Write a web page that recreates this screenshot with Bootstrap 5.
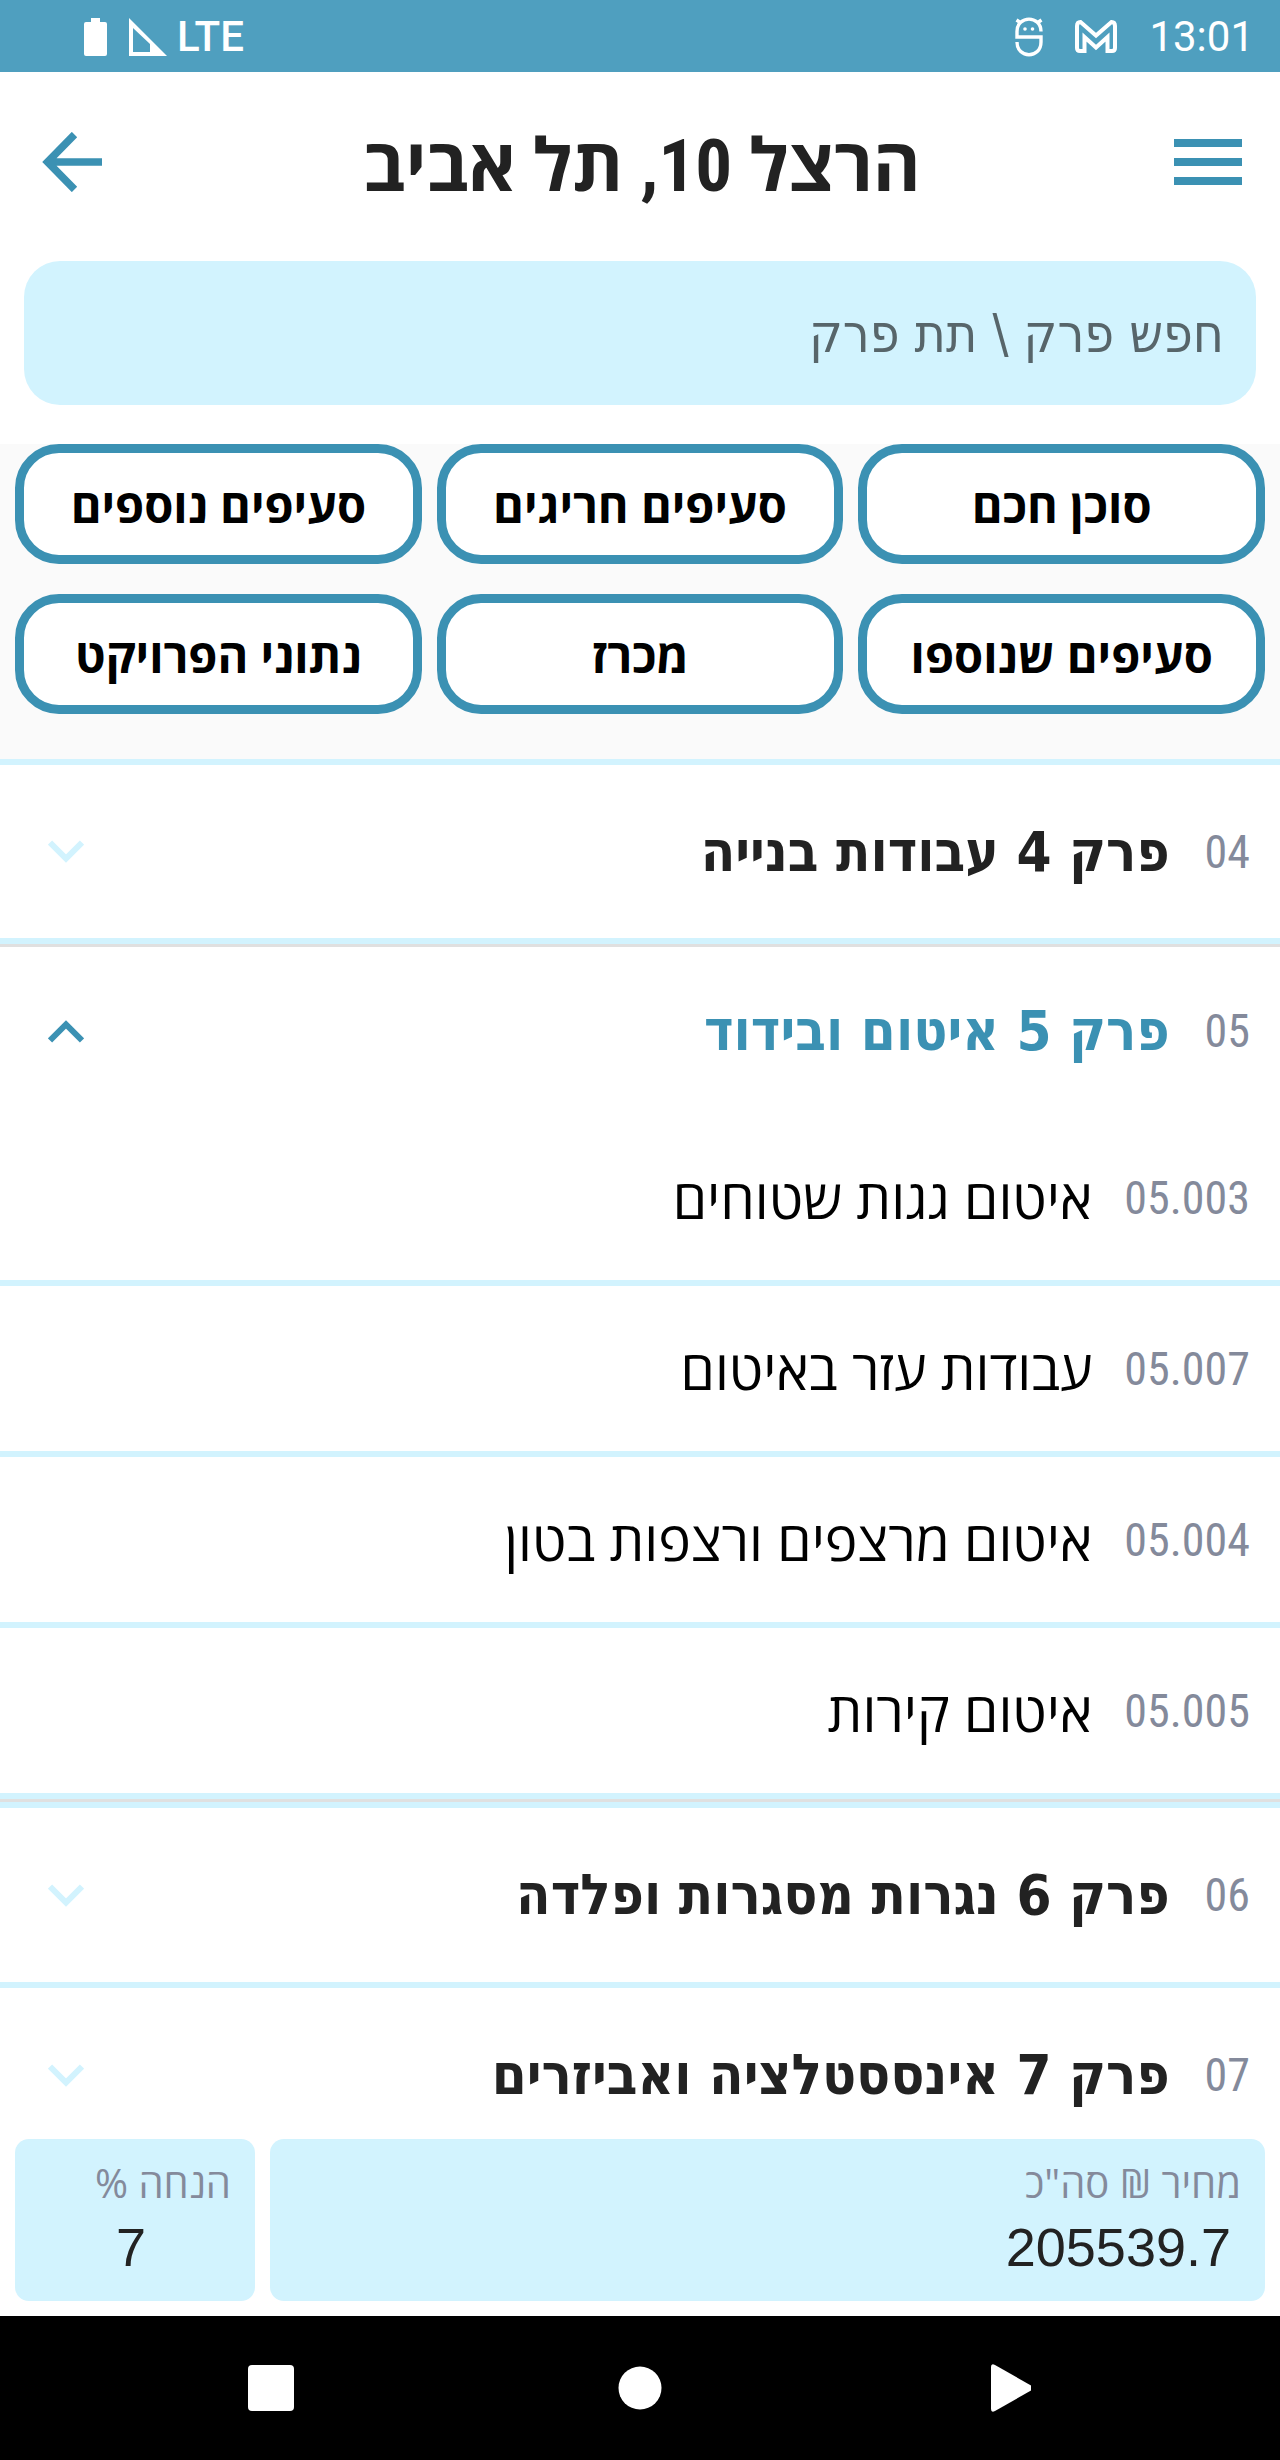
<!DOCTYPE html>
<html lang="he" dir="rtl">
<head>
<meta charset="utf-8">
<meta name="viewport" content="width=device-width, initial-scale=1">
<title>הרצל 10, תל אביב</title>
<link rel="stylesheet" href="https://cdn.jsdelivr.net/npm/bootstrap@5.3.0/dist/css/bootstrap.min.css">
<style>
:root{--brand:#3b91b3;--pale:#d2f3fe;--muted-ink:#848a9b;--ink:#222}
body{font-family:"Open Sans","Liberation Sans",sans-serif;color:var(--ink);background:#fff}
svg{display:block;flex:none}
.status-bar{height:72px;background:#4f9fbf;color:#fff;font:42px/72px Roboto,sans-serif;padding:2px 26px 0 84px}
.status-icons{gap:32px}
.signal-icons{gap:10px}
.signal-icons span{font-weight:500}
.signal-icons .battery{margin-right:12px}
.app-header{height:180px;padding:0 38px 0 42px}
.app-header h1{font:700 73px/84px "Roboto Condensed","Open Sans",sans-serif;margin:0;padding-top:8px}
.icon-btn{background:none;border:0;padding:0;color:var(--brand);width:68px}
.search-wrap{padding:9px 24px 39px}
.search-box,.search-box:focus{height:144px;border:0;border-radius:36px;background:var(--pale);padding:0 32px;font:53px/72px "DejaVu Sans Condensed","DejaVu Sans",sans-serif;color:#222;box-shadow:none}
.search-box::placeholder{color:#57656a;opacity:1}
.action-grid{display:grid;grid-template-columns:repeat(3,1fr);gap:30px 15px;padding:0 15px 45px;background:#fafafa}
.action-btn{height:120px;border:9px solid var(--brand);border-radius:44px;background:#fff;color:#000;font:700 47px/64px "Open Sans",sans-serif;padding:2px 0 0;white-space:nowrap}
.chapter-list{min-height:0;border-top:6px solid var(--pale)}
.chapter-head{height:173px;border:0;background:#fff;padding:0 30px 0 48px;gap:35px;font:700 56px/72px "DejaVu Sans Condensed","DejaVu Sans",sans-serif;color:var(--ink);text-align:right}
.chapter-head svg{color:var(--pale)}
.chapter-head.is-open{height:168px}
.chapter-head.is-open,.chapter-head.is-open svg{color:var(--brand)}
.chapter-line{border-bottom:6px solid var(--pale)}
.open-chapter{border-top:3px solid #e0e0e0;border-bottom:3px solid #e0e0e0}
.open-chapter ~ div .chapter-head{height:174px}
.code-no{font:400 46px/72px "Roboto Condensed","Open Sans",sans-serif;color:var(--muted-ink)}
.sub-item{height:171px;padding:0 30px;gap:32px;border-bottom:6px solid var(--pale);color:#000;text-decoration:none;font:500 55px/72px "Open Sans",sans-serif}
.totals{gap:15px;padding:0 15px 15px;background:#fff}
.total-card{border-radius:14px;background:var(--pale);height:162px;padding:14px 24px 0}
.total-card label{display:block;font:40px/60px "Open Sans",sans-serif;color:var(--muted-ink)}
.total-card input{display:block;width:100%;border:0;padding:0 10px;background:none;font:54px/68px "Liberation Sans",Arial,sans-serif;height:68px;color:var(--ink)}
.total-card.discount-card{width:240px;padding-left:16px}
.nav-bar{height:144px;background:#000}
.nav-bar button{background:none;border:0;padding:0;width:369px;color:#fff;display:flex;justify-content:center}
</style>
</head>
<body>
<div class="d-flex flex-column vh-100 overflow-hidden">
  <div class="status-bar d-flex justify-content-between align-items-center flex-shrink-0">
    <div class="status-icons d-flex align-items-center">
      <span>13:01</span>
      <svg width="42" height="35" viewBox="0 0 42 35" fill="none" stroke="currentColor" stroke-width="4"><path d="M2 28V6Q2 2 5.500 2L21 15.500L36.500 2Q40 2 40 6V28Q40 31 37 31H32.500V17L21 27.500L9.500 17V31H5Q2 31 2 28Z"/></svg>
      <svg width="28" height="40" viewBox="0 0 28 40" fill="none" stroke="currentColor" stroke-width="3.400"><path d="M26 14.500C26 -2 2 -2 2 14.500V20H26V25C26 42 2 42 2 25"/><path d="M1.500 3L6 6M26.500 3L22 6"/><circle cx="10" cy="12" r="1.800" fill="currentColor" stroke="none"/><circle cx="17.500" cy="12" r="1.800" fill="currentColor" stroke="none"/></svg>
    </div>
    <div class="signal-icons d-flex align-items-center">
      <span>LTE</span>
      <svg width="38" height="38" viewBox="0 0 38 38" fill="currentColor" fill-rule="evenodd"><path d="M0 0L38 38H0ZM4 10V34H21V26Z"/></svg>
      <svg class="battery" width="23" height="38" viewBox="0 0 23 38" fill="currentColor"><path d="M7 0H16V4H21Q23 4 23 6V36Q23 38 21 38H2Q0 38 0 36V6Q0 4 2 4H7Z"/></svg>
    </div>
  </div>

  <header class="app-header d-flex justify-content-between align-items-center flex-shrink-0">
    <button class="icon-btn" type="button" aria-label="תפריט">
      <svg width="68" height="46" viewBox="0 0 68 46" fill="currentColor"><path d="M0 0H68V8H0ZM0 19H68V27H0ZM0 38H68V46H0Z"/></svg>
    </button>
    <h1>הרצל 10, תל אביב</h1>
    <button class="icon-btn d-flex justify-content-end" type="button" aria-label="חזרה">
      <svg width="60" height="60" viewBox="0 0 60 60" fill="none" stroke="currentColor" stroke-width="7.500"><path d="M60 30H6M32.500 2.500L5.500 30L32.500 57.500"/></svg>
    </button>
  </header>

  <div class="search-wrap flex-shrink-0">
    <input class="form-control search-box" type="text" placeholder="חפש פרק \ תת פרק" aria-label="חפש פרק">
  </div>

  <div class="action-grid flex-shrink-0">
    <button class="action-btn" type="button">סוכן חכם</button>
    <button class="action-btn" type="button">סעיפים חריגים</button>
    <button class="action-btn" type="button">סעיפים נוספים</button>
    <button class="action-btn" type="button">סעיפים שנוספו</button>
    <button class="action-btn" type="button">מכרז</button>
    <button class="action-btn" type="button">נתוני הפרויקט</button>
  </div>

  <main class="chapter-list flex-grow-1 overflow-hidden">
    <div class="chapter-line">
      <button class="chapter-head d-flex align-items-center w-100" type="button" aria-expanded="false">
        <span class="code-no">04</span><span class="flex-grow-1">פרק 4 עבודות בנייה</span>
        <svg width="36" height="23" viewBox="0 0 36 23" fill="none" stroke="currentColor" stroke-width="6"><path d="M2 2.500L18 18.500L34 2.500"/></svg>
      </button>
    </div>
    <section class="open-chapter">
      <button class="chapter-head is-open d-flex align-items-center w-100" type="button" aria-expanded="true">
        <span class="code-no">05</span><span class="flex-grow-1">פרק 5 איטום ובידוד</span>
        <svg width="36" height="23" viewBox="0 0 36 23" fill="none" stroke="currentColor" stroke-width="6"><path d="M2 20.500L18 4.500L34 20.500"/></svg>
      </button>
      <a class="sub-item d-flex align-items-center" href="#"><span class="code-no">05.003</span><span>איטום גגות שטוחים</span></a>
      <a class="sub-item d-flex align-items-center" href="#"><span class="code-no">05.007</span><span>עבודות עזר באיטום</span></a>
      <a class="sub-item d-flex align-items-center" href="#"><span class="code-no">05.004</span><span>איטום מרצפים ורצפות בטון</span></a>
      <a class="sub-item d-flex align-items-center" href="#"><span class="code-no">05.005</span><span>איטום קירות</span></a>
    </section>
    <div class="chapter-line">
      <div class="chapter-line"></div>
      <button class="chapter-head d-flex align-items-center w-100" type="button" aria-expanded="false">
        <span class="code-no">06</span><span class="flex-grow-1">פרק 6 נגרות מסגרות ופלדה</span>
        <svg width="36" height="23" viewBox="0 0 36 23" fill="none" stroke="currentColor" stroke-width="6"><path d="M2 2.500L18 18.500L34 2.500"/></svg>
      </button>
    </div>
    <div>
      <button class="chapter-head d-flex align-items-center w-100" type="button" aria-expanded="false">
        <span class="code-no">07</span><span class="flex-grow-1">פרק 7 אינססטלציה ואביזרים</span>
        <svg width="36" height="23" viewBox="0 0 36 23" fill="none" stroke="currentColor" stroke-width="6"><path d="M2 2.500L18 18.500L34 2.500"/></svg>
      </button>
    </div>
  </main>

  <footer class="flex-shrink-0">
    <div class="totals d-flex">
      <div class="total-card flex-grow-1">
        <label for="total-price">מחיר ₪ סה"כ</label>
        <input id="total-price" type="text" value="205539.7">
      </div>
      <div class="total-card discount-card">
        <label for="discount">הנחה %</label>
        <input id="discount" class="text-center" type="text" value="7">
      </div>
    </div>
    <nav class="nav-bar d-flex justify-content-center align-items-center" aria-label="ניווט">
      <button type="button" aria-label="אחורה"><svg width="44" height="48" viewBox="0 0 44 48" fill="currentColor"><path d="M4 3Q4 -1 8 1L44 21.500Q47 24 44 26.500L8 47Q4 49 4 45Z"/></svg></button>
      <button type="button" aria-label="בית"><svg width="44" height="44" viewBox="0 0 44 44" fill="currentColor"><circle cx="22" cy="22" r="21.500"/></svg></button>
      <button type="button" aria-label="יישומים"><svg width="46" height="46" viewBox="0 0 46 46" fill="currentColor"><rect width="46" height="46" rx="4"/></svg></button>
    </nav>
  </footer>
</div>
<script src="https://cdn.jsdelivr.net/npm/bootstrap@5.3.0/dist/js/bootstrap.bundle.min.js"></script>
</body>
</html>
